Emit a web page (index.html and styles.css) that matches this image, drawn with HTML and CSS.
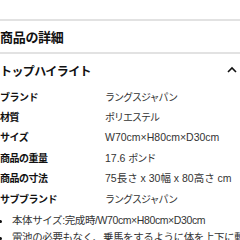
FILE: index.html
```html
<!DOCTYPE html>
<html lang="ja">
<head>
<meta charset="utf-8">
<link rel="stylesheet" href="styles.css">
</head>
<body>
<div class="page">
  <div class="title">商品の詳細</div>
  <div class="highlight">
    <span class="hl-text">トップハイライト</span>
    <svg class="chev" width="10" height="7" viewBox="0 0 10 7"><path d="M1 6 L5 2 L9 6" fill="none" stroke="#111" stroke-width="1.6"/></svg>
  </div>
  <div class="specs">
    <div class="label">ブランド</div><div class="value jp">ラングスジャパン</div>
    <div class="label">材質</div><div class="value jp">ポリエステル</div>
    <div class="label">サイズ</div><div class="value">W70cm×H80cm×D30cm</div>
    <div class="label">商品の重量</div><div class="value">17.6 <span class="jp">ポンド</span></div>
    <div class="label">商品の寸法</div><div class="value">75長さ x 30幅 x 80高さ cm</div>
    <div class="label">サブブランド</div><div class="value jp">ラングスジャパン</div>
  </div>
  <ul class="bullets">
    <li>本体サイズ:完成時/W70cm×H80cm×D30cm</li>
    <li>電池の必要もなく、乗馬をするように体を上下に動かすだけ</li>
  </ul>
</div>
</body>
</html>
```
FILE: styles.css
```css
html, body {
  margin: 0;
  padding: 0;
  background: #fff;
  overflow: hidden;
}
body {
  font-family: "Liberation Sans", "Noto Sans CJK JP", sans-serif;
  color: #111;
}
.page {
  padding-top: 19px;
}
.title {
  border-top: 2px solid #e2e2e2;
  border-bottom: 2px solid #e2e2e2;
  height: 31px;
  display: flex;
  align-items: center;
  font-family: "Noto Sans CJK JP", sans-serif;
  font-size: 13px;
  font-weight: bold;
  letter-spacing: -0.3px;
}
.highlight {
  height: 32px;
  display: flex;
  align-items: center;
  justify-content: space-between;
  padding-right: 3px;
}
.hl-text {
  font-family: "Noto Sans CJK JP", sans-serif;
  font-size: 12px;
  font-weight: bold;
  letter-spacing: -0.6px;
}
.chev {
  display: block;
  margin-top: -2px;
}
.specs {
  display: grid;
  grid-template-columns: 105px 1fr;
  grid-auto-rows: 20.4px;
  align-items: center;
}
.label {
  font-family: "Noto Sans CJK JP", sans-serif;
  font-size: 10px;
  font-weight: bold;
  letter-spacing: -0.5px;
  color: #111;
  white-space: nowrap;
}
.value {
  font-size: 10.5px;
  color: #333;
  white-space: nowrap;
}
.jp {
  font-family: "Noto Sans CJK JP", sans-serif;
  font-size: 10px;
  letter-spacing: -1px;
}
.bullets {
  margin: 0;
  padding: 4px 0 0 12px;
  font-size: 10.5px;
  line-height: 17px;
  color: #333;
}
.bullets li {
  white-space: nowrap;
  letter-spacing: -0.4px;
}
.bullets li::marker {
  color: #111;
}
```
